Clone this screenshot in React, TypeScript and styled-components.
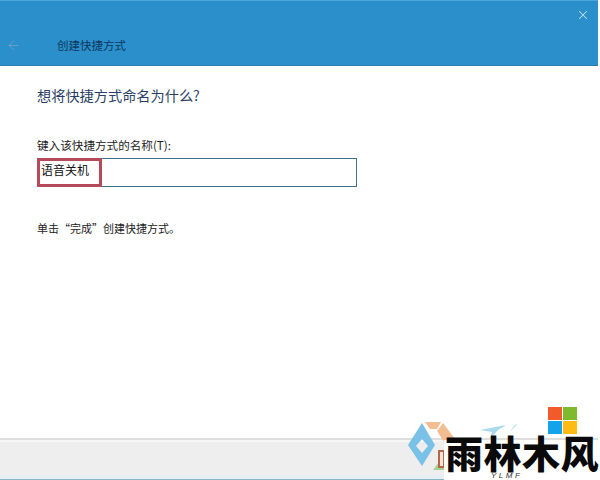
import styled, { createGlobalStyle } from 'styled-components';
import { ArrowLeft, X } from 'lucide-react';

const GlobalStyle = createGlobalStyle`
  html, body {
    margin: 0;
    padding: 0;
    background: #fff;
  }
  body {
    font-family: "Noto Sans CJK SC", "Liberation Sans", sans-serif;
  }
`;

const Page = styled.div`
  position: relative;
  width: 600px;
  height: 480px;
  overflow: hidden;
  background: #fff;
`;

const Wizard = styled.div`
  width: 598px;
  height: 480px;
  box-sizing: border-box;
  display: flex;
  flex-direction: column;
  border-bottom: 1px solid #8db4c2;
`;

const TitleBar = styled.header`
  height: 64px;
  flex: none;
  display: flex;
  align-items: flex-start;
  background: #2b8fcb;
  border-top: 1px solid #4ba6dc;
  border-bottom: 1px solid #2b7cab;
`;

const BackButton = styled.div`
  width: 57px;
  height: 16px;
  margin-top: 36px;
  padding-left: 6px;
  box-sizing: border-box;
  color: #6aa3c4;
  display: flex;
  align-items: center;
`;

const TitleText = styled.div`
  margin-top: 36px;
  font-size: 11.5px;
  line-height: 16px;
  color: #0c3a60;
`;

const CloseButton = styled.div`
  margin-left: auto;
  margin-top: 7px;
  margin-right: 8px;
  color: #b9e2f5;
  display: flex;
`;

const Content = styled.main`
  flex: 1;
  padding: 18px 0 0 37px;
  color: #1c1c1c;
`;

const Heading = styled.h1`
  margin: 0 0 31px;
  font-size: 14.2px;
  line-height: 22px;
  font-weight: 400;
  color: #2a3f63;
`;

const FieldLabel = styled.label`
  display: block;
  font-size: 11.6px;
  line-height: 16px;
  margin-bottom: 5px;
  color: #222;
`;

const NameField = styled.div`
  width: 320px;
  height: 29px;
  box-sizing: border-box;
  border: 1px solid #3f7188;
  position: relative;
`;

const Highlight = styled.div`
  position: absolute;
  left: -1px;
  top: -1px;
  width: 65px;
  height: 29px;
  box-sizing: border-box;
  border: 3px solid #b54a5b;
  padding-left: 1px;
  font-size: 12px;
  line-height: 18px;
  color: #111;
`;

const Hint = styled.p`
  margin: 33px 0 0;
  font-size: 11px;
  line-height: 16px;
  color: #222;
`;

const Footer = styled.footer`
  height: 35px;
  flex: none;
  margin-bottom: 4px;
  background: #efeeef;
  border-top: 2px solid #dedede;
  box-shadow: inset 0 2px 0 #f6f6f6, 0 4px 0 #e6f0f4;
`;

const WindowsMark = styled.div`
  position: absolute;
  left: 548px;
  top: 407px;
  display: grid;
  grid-template-columns: 14px 14px;
  grid-auto-rows: 13px;
  gap: 1px;
`;

const Pane = styled.span<{ $color: string }>`
  background: ${(p) => p.$color};
`;

const DiamondMark = styled.svg`
  position: absolute;
  left: 406px;
  top: 420px;
`;

const Plane = styled.svg`
  position: absolute;
  left: 478px;
  top: 424px;
`;

const LogoPlate = styled.div`
  position: absolute;
  left: 444px;
  top: 440px;
  width: 156px;
  height: 40px;
  background: #fff;
`;

const LogoName = styled.div`
  margin: -6px 0 0 1px;
  font-size: 38px;
  line-height: 36px;
  height: 36px;
  font-weight: 900;
  letter-spacing: 0.5px;
  color: #0a0a0a;
  white-space: nowrap;
`;

const LogoLatin = styled.div`
  position: absolute;
  left: 47px;
  top: 31px;
  font-family: "Liberation Sans", sans-serif;
  font-size: 8px;
  line-height: 9px;
  font-style: italic;
  letter-spacing: 2.5px;
  color: #333;
`;

export default function App() {
  return (
    <Page>
      <GlobalStyle />
      <Wizard>
        <TitleBar>
          <BackButton>
            <ArrowLeft size={15} strokeWidth={1.5} />
          </BackButton>
          <TitleText>创建快捷方式</TitleText>
          <CloseButton>
            <X size={14} strokeWidth={1.75} />
          </CloseButton>
        </TitleBar>
        <Content>
          <Heading>想将快捷方式命名为什么?</Heading>
          <FieldLabel>键入该快捷方式的名称(T):</FieldLabel>
          <NameField>
            <Highlight>语音关机</Highlight>
          </NameField>
          <Hint>单击“完成”创建快捷方式。</Hint>
        </Content>
        <Footer />
      </Wizard>
      <DiamondMark width="56" height="56" viewBox="0 0 56 56">
        <path
          fillRule="evenodd"
          d="M16 3 L2 25 L16 46 L29 25 Z M16 19 L22 26 L16 33 L10 26 Z"
          fill="#79c1e6"
        />
        <path d="M19 2 H35 L31 9 H24 Z" fill="#f3bd92" />
        <path d="M37 3 L49 19 L38 22 L31 11 Z" fill="#f3bd92" />
        <path d="M27 50 L36 38 L38 50 Z" fill="#a6cf92" />
        <rect x="33" y="31" width="5" height="16" fill="#f3e4d8" stroke="#b5654c" strokeWidth="2" />
      </DiamondMark>
      <Plane width="44" height="18" viewBox="0 0 44 18">
        <path d="M2 6 L28 1 L20 6 L12 15 L14 8 Z" fill="#a8d9ec" />
        <path d="M36 1 L40 0 L32 8 Z" fill="#cfe8f2" />
      </Plane>
      <WindowsMark>
        <Pane $color="#f25a2b" />
        <Pane $color="#7fba2d" />
        <Pane $color="#12a3ea" />
        <Pane $color="#fdbb13" />
      </WindowsMark>
      <LogoPlate>
        <LogoName>雨林木风</LogoName>
        <LogoLatin>YLMF</LogoLatin>
      </LogoPlate>
    </Page>
  );
}
